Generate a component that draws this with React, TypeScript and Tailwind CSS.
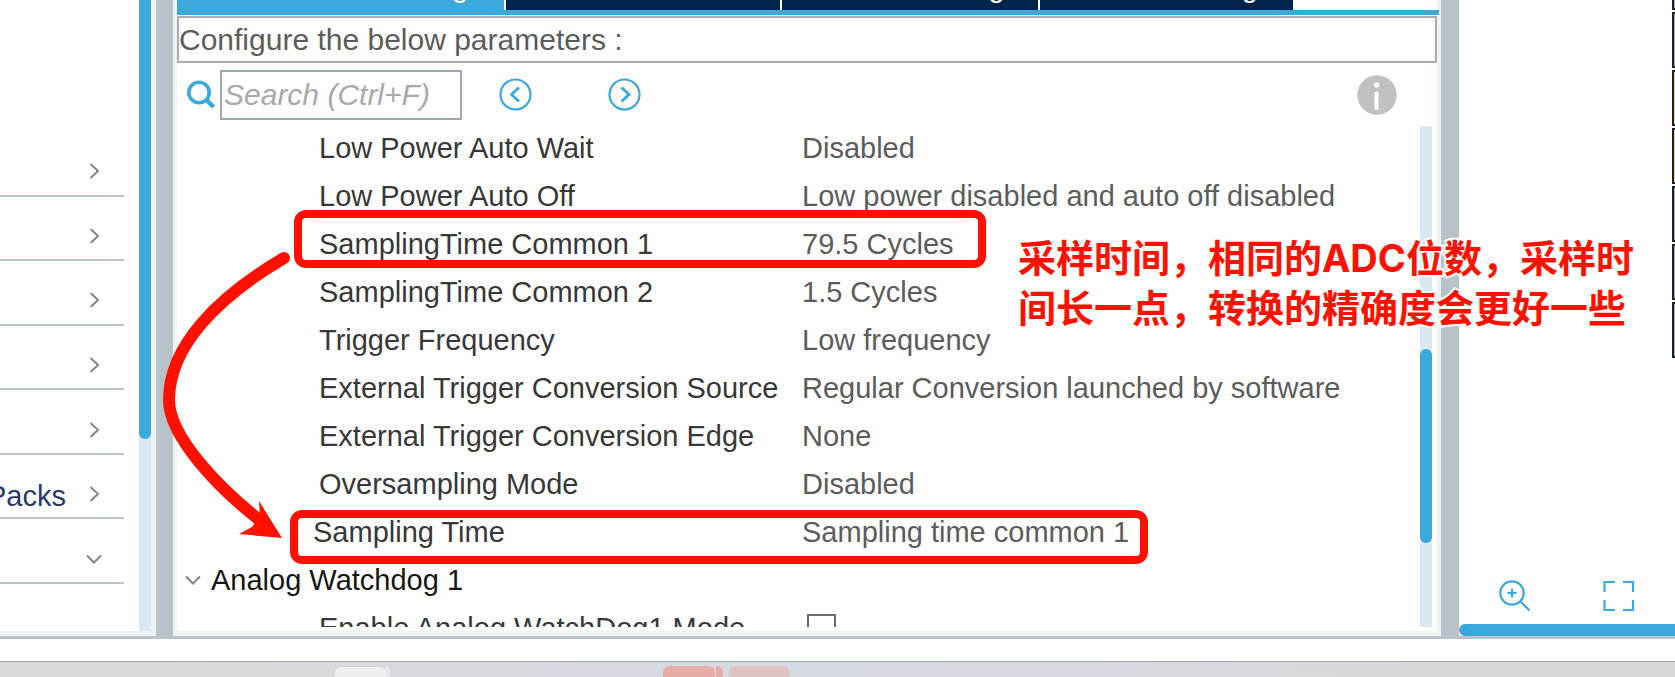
import type { ReactNode } from 'react';

const tabs = [
  { label: 'Parameter Settings', active: true, size: 'w-[327px]' },
  { label: 'User Constants', active: false, size: 'w-[274px]' },
  { label: 'NVIC Settings', active: false, size: 'w-[256px]' },
  { label: 'DMA Settings', active: false, size: 'w-[253px]' },
];

const parameters = [
  { name: 'Low Power Auto Wait', value: 'Disabled' },
  { name: 'Low Power Auto Off', value: 'Low power disabled and auto off disabled' },
  { name: 'SamplingTime Common 1', value: '79.5 Cycles' },
  { name: 'SamplingTime Common 2', value: '1.5 Cycles' },
  { name: 'Trigger Frequency', value: 'Low frequency' },
  { name: 'External Trigger Conversion Source', value: 'Regular Conversion launched by software' },
  { name: 'External Trigger Conversion Edge', value: 'None' },
  { name: 'Oversampling Mode', value: 'Disabled' },
  { name: 'Sampling Time', value: 'Sampling time common 1', outdent: true },
];

const categories = [
  { label: '', open: false },
  { label: '', open: false },
  { label: '', open: false },
  { label: '', open: false },
  { label: '', open: false },
  { label: 'Packs', open: false },
  { label: '', open: true },
];

const pins = ['bg-[#a9b3b7]', 'bg-[#e8dca0]', 'bg-[#e8dca0]', 'bg-[#a9b3b7]', 'bg-[#a9b3b7]', 'bg-[#a9b3b7]'];

function Chevron({ down = false }: { down?: boolean }) {
  return (
    <svg width="16" height="16" viewBox="0 0 16 16" fill="none" stroke="#858585" strokeWidth="2" className="shrink-0">
      <path d={down ? 'M1 4.5 8 11.5 15 4.5' : 'M4.5 1 12 8 4.5 15'} />
    </svg>
  );
}

function CircleButton({ label, children }: { label: string; children: ReactNode }) {
  return (
    <button aria-label={label} className="shrink-0">
      <svg width="33" height="33" viewBox="0 0 33 33" fill="none" stroke="#3ba9dc" strokeWidth="2.2">
        <circle cx="16.5" cy="16.5" r="15" />
        {children}
      </svg>
    </button>
  );
}

function Sidebar() {
  return (
    <aside className="flex w-[156px] shrink-0 border-r-[5px] border-b-[5px] border-[#eff1f3]">
      <nav className="mr-[15px] flex h-[584px] min-w-0 flex-1 flex-col pt-[132px]">
        {categories.map((item, i) => (
          <button
            key={i}
            aria-label={item.label || 'Category'}
            className="flex flex-1 items-center justify-end gap-5 border-b-2 border-[#bcc5ca] pt-4 pr-[22px] text-[29px] leading-8 text-[#2b3a6e]"
          >
            {item.label && <span className="pt-1 whitespace-nowrap">{item.label}</span>}
            <Chevron down={item.open} />
          </button>
        ))}
      </nav>
      <div className="w-3 shrink-0 bg-[#d9e8f5]">
        <div className="h-[439px] rounded-b-full bg-[#3ba9dc]" />
      </div>
    </aside>
  );
}

function Toolbar() {
  return (
    <div className="flex h-[63px] items-center pr-10 pl-[9px]">
      <label htmlFor="search" aria-label="Search" className="shrink-0">
        <svg width="30" height="30" viewBox="0 0 30 30" fill="none" stroke="#3ba9dc" strokeWidth="3.6">
          <circle cx="13" cy="12.500" r="10.200" />
          <path d="m20 19.500 7.500 7.500" strokeWidth="4.400" />
        </svg>
      </label>
      <input
        id="search"
        placeholder="Search (Ctrl+F)"
        className="ml-1 h-[50px] w-[242px] border-2 border-[#a0a6ab] px-[2px] text-[30px] italic outline-none placeholder:text-[#a9a9a9]"
      />
      <div className="ml-[37px] flex gap-[76px]">
        <CircleButton label="Previous">
          <path d="m20 9.500-7.500 7 7.500 7" strokeWidth="2.800" />
        </CircleButton>
        <CircleButton label="Next">
          <path d="m13.500 9.500 7.500 7-7.500 7" strokeWidth="2.800" />
        </CircleButton>
      </div>
      <button aria-label="Information" className="ml-auto">
        <svg width="40" height="40" viewBox="0 0 40 40">
          <circle cx="20" cy="20" r="19.7" fill="#c1c1c1" />
          <circle cx="19.5" cy="10" r="2.7" fill="#fff" />
          <rect x="17.5" y="16.5" width="4" height="18.5" rx="1.5" fill="#fff" />
        </svg>
      </button>
    </div>
  );
}

function ParameterTable() {
  return (
    <table className="w-full table-fixed border-collapse text-left">
      <colgroup>
        <col className="w-[625px]" />
        <col />
      </colgroup>
      <tbody>
        {parameters.map((row) => (
          <tr key={row.name} className="h-12">
            <th scope="row" className={`whitespace-nowrap p-0 font-normal text-[#383838] ${row.outdent ? 'pl-[136px]' : 'pl-[142px]'}`}>
              {row.name}
            </th>
            <td className="whitespace-nowrap p-0 text-[#5c5c5c]">{row.value}</td>
          </tr>
        ))}
        <tr className="h-12">
          <th scope="rowgroup" colSpan={2} className="p-0 font-normal text-[#161616]">
            <button className="flex items-center gap-[10px] pl-2">
              <Chevron down />
              Analog Watchdog 1
            </button>
          </th>
        </tr>
        <tr className="h-12">
          <th scope="row" className="p-0 pl-[142px] font-normal whitespace-nowrap text-[#383838]">
            <label htmlFor="watchdog">Enable Analog WatchDog1 Mode</label>
          </th>
          <td className="p-0 pl-[5px]">
            <input id="watchdog" type="checkbox" className="block size-[29px] appearance-none border-2 border-[#6b6b6b]" />
          </td>
        </tr>
      </tbody>
    </table>
  );
}

function ConfigPanel() {
  return (
    <main className="flex min-w-0 flex-1 flex-col border-r-4 border-b-[5px] border-l-4 border-[#f1f2f3] bg-white">
      <div className="-mr-[2px] flex h-[15px] shrink-0 gap-[2px] border-b-[5px] border-[#3ba9dc]">
        {tabs.map((tab) => (
          <button
            key={tab.label}
            className={`flex h-[10px] items-end justify-center overflow-hidden pl-9 text-[29px] leading-[46px] whitespace-nowrap text-white ${tab.size} ${tab.active ? 'bg-[#3ba9dc]' : 'bg-[#02234a]'}`}
          >
            {tab.label}
          </button>
        ))}
      </div>
      <h1 className="mt-px h-[47px] shrink-0 border-2 border-[#a8adb2] text-[30px] leading-[43px] text-[#5c5c5c]">Configure the below parameters :</h1>
      <Toolbar />
      <div className="mb-1 flex h-[501px] overflow-hidden pr-[5px] text-[29px] leading-8">
        <div className="-mt-[2px] min-w-0 flex-1">
          <ParameterTable />
        </div>
        <div className="w-3 shrink-0 bg-[#d9e8f5] pt-[223px]">
          <div className="h-[194px] rounded-full bg-[#3ba9dc]" />
        </div>
      </div>
    </main>
  );
}

function Preview() {
  return (
    <section className="flex w-[216px] shrink-0 flex-col bg-white">
      <div className="flex w-full flex-1 flex-col items-end gap-[2px]">
        <div className="h-[10px] w-[3px] border-b-2 border-l-2 border-[#1d1f21] bg-[#a9b3b7]" />
        {pins.map((fill, i) => (
          <div key={i} className={`h-14 w-[3px] border-y-2 border-l-2 border-[#1d1f21] ${fill}`} />
        ))}
      </div>
      <div className="mb-3 flex justify-end gap-[72px] pr-10">
        <button aria-label="Zoom in">
          <svg width="32" height="32" viewBox="0 0 32 32" fill="none" stroke="#3ba9dc" strokeWidth="2.2">
            <circle cx="13" cy="13" r="11.7" />
            <path d="m21.500 21.500 9 9M13 8.500v9M8.500 13h9" />
          </svg>
        </button>
        <button aria-label="Fit to screen">
          <svg width="32" height="32" viewBox="0 0 32 32" fill="none" stroke="#3ba9dc" strokeWidth="2.2">
            <path d="M1.500 12V2H12M20 2h10v10M30 20v10H20M12 30H1.500V20" />
          </svg>
        </button>
      </div>
      <div className="h-3 rounded-l-full bg-[#3ba9dc]" />
    </section>
  );
}

function Taskbar() {
  return (
    <footer className="flex h-4 items-start overflow-hidden border-t border-[#a9a9a9] bg-linear-to-r from-[#d9d9d9] via-[#d5d9e2] to-[#d8d8d8] pl-[335px]">
      <div className="mt-[5px] h-5 w-[51px] rounded-t-md bg-[#efefef]" />
      <div className="mt-[5px] h-5 w-1 rounded-tr-md bg-[#e9e9e9]" />
      <div className="mt-1 ml-[273px] h-5 w-[52px] rounded-t-md bg-[#e8aca6]" />
      <div className="mt-1 ml-px h-5 w-[7px] rounded-tr-md bg-[#e8aca6]" />
      <div className="mt-1 ml-[6px] h-5 w-[60px] rounded-t-md bg-[#dfc3c4]" />
    </footer>
  );
}

function Annotations() {
  return (
    <div className="pointer-events-none absolute inset-0">
      <div className="absolute top-[210px] left-[294px] h-[58px] w-[692px] rounded-xl border-8 border-[#ff1100]" />
      <div className="absolute top-[510px] left-[290px] h-[54px] w-[858px] rounded-xl border-8 border-[#ff1100]" />
      <svg className="absolute top-[240px] left-[155px]" width="150" height="310" viewBox="155 240 150 310">
        <path d="M284 258C216 298 169 347 169 400C169 436 217 487 262 522" fill="none" stroke="#ff1100" strokeWidth="12" strokeLinecap="round" />
        <path d="M282 538 259 501 260 516 252 527 239 534Z" fill="#ff1100" />
      </svg>
      <p className="absolute top-[233px] left-[1018px] text-[38px] leading-[50px] font-bold whitespace-nowrap text-[#ff1100] [font-family:Inter,'Noto_Sans_CJK_SC',sans-serif] [paint-order:stroke_fill] [-webkit-text-stroke:4px_white]">
        采样时间，相同的ADC位数，采样时
        <br />
        间长一点，转换的精确度会更好一些
      </p>
    </div>
  );
}

export default function App() {
  return (
    <div className="relative overflow-hidden bg-white [font-family:'Liberation_Sans',Arial,sans-serif]">
      <div className="flex border-b-[3px] border-[#b8c3c9]">
        <Sidebar />
        <div className="w-[17px] shrink-0 bg-[#b8c3c9]" />
        <ConfigPanel />
        <div className="w-[18px] shrink-0 bg-[#b8c3c9]" />
        <Preview />
      </div>
      <div className="h-[22px]" />
      <Taskbar />
      <Annotations />
    </div>
  );
}
